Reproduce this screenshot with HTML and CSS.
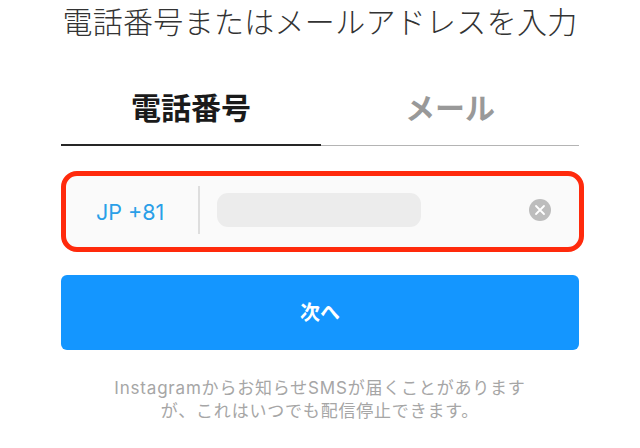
FILE: index.html
```html
<!DOCTYPE html>
<html lang="ja">
  <head>
    <meta charset="UTF-8" />
    <title>電話番号またはメールアドレスを入力</title>
    <link rel="stylesheet" href="styles.css">
  </head>
  <body>
    <div class="main">
      <h1 class="title">電話番号またはメールアドレスを入力</h1>
      <div class="tabs">
        <div class="tab tabActive">電話番号</div>
        <div class="tab">メール</div>
      </div>
      <div class="field">
        <span class="country">JP +81</span>
        <span class="fieldLine"></span>
        <span class="blank"></span>
        <svg class="clear" width="22" height="22" viewBox="0 0 22 22">
          <circle cx="11" cy="11" r="11" fill="#bdbdbd" />
          <path d="M7 7l8 8M15 7l-8 8" stroke="#fff" stroke-width="1.8" stroke-linecap="round" />
        </svg>
      </div>
      <div class="nextBtn">次へ</div>
      <p class="note">Instagramからお知らせSMSが届くことがあります<br />が、これはいつでも配信停止できます。</p>
    </div>
  </body>
</html>
```

FILE: styles.css
```css
* {
  padding: 0;
  margin: 0;
  box-sizing: border-box;
  font-family: Inter, "Noto Sans CJK JP", sans-serif;
}
body {
  background-color: white;
  overflow: hidden;
}
.main {
  display: flex;
  flex-direction: column;
  width: 640px;
  height: 448px;
  padding-left: 61px;
}
.title {
  width: 518px;
  height: 44px;
  font-size: 30px;
  line-height: 44px;
  font-weight: 300;
  letter-spacing: 0.3px;
  color: #333;
  text-align: center;
  white-space: nowrap;
}
.tabs {
  display: flex;
  width: 518px;
  margin-top: 40px;
}
.tab {
  flex: 1;
  height: 62px;
  font-size: 30px;
  line-height: 48px;
  font-weight: 700;
  text-align: center;
  color: #999;
  border-bottom: 1px solid #b4b4b4;
}
.tabActive {
  flex: 0 0 260px;
  color: #1a1a1a;
  border-bottom: 2px solid #262626;
}
.field {
  display: flex;
  align-items: center;
  width: 523px;
  height: 81px;
  margin-top: 25px;
  padding-left: 30px;
  padding-bottom: 3px;
  background-color: #fafafa;
  border: 5px solid #ff2a0c;
  border-radius: 16px;
}
.country {
  width: 102px;
  padding-top: 3px;
  font-size: 21.5px;
  color: #2a9fe8;
}
.fieldLine {
  width: 2px;
  height: 48px;
  background-color: #dedede;
}
.blank {
  width: 204px;
  height: 34px;
  margin-left: 17px;
  background-color: #ececec;
  border-radius: 11px;
}
.clear {
  margin-left: 108px;
}
.nextBtn {
  width: 518px;
  height: 75px;
  margin-top: 23px;
  background-color: #1496ff;
  border-radius: 6px;
  color: white;
  font-size: 20px;
  font-weight: 700;
  line-height: 77px;
  text-align: center;
}
.note {
  width: 518px;
  margin-top: 27px;
  font-size: 17px;
  line-height: 23px;
  letter-spacing: 0.8px;
  color: #a6a6a6;
  text-align: center;
  white-space: nowrap;
}
```
